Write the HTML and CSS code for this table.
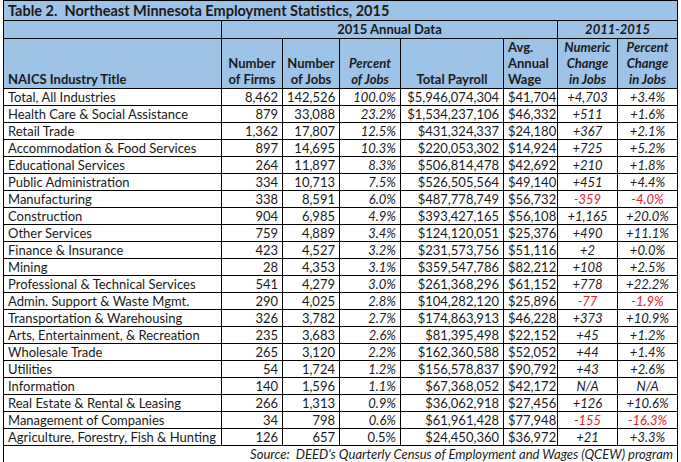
FILE: index.html
```html
<!DOCTYPE html>
<html>
<head>
<meta charset="utf-8">
<link rel="stylesheet" href="styles.css">
</head>
<body>
<table class="stats">
  <colgroup>
    <col class="c-name"><col class="c-firms"><col class="c-jobs"><col class="c-pct"><col class="c-pay"><col class="c-wage"><col class="c-num"><col class="c-chg">
  </colgroup>
  <thead>
    <tr class="r-title"><th colspan="8" class="title">Table 2.&nbsp; Northeast Minnesota Employment Statistics, 2015</th></tr>
    <tr class="r-group"><th></th><th colspan="5" class="grp">2015 Annual Data</th><th colspan="2" class="grp it">2011-2015</th></tr>
    <tr class="r-head">
      <th class="h-left">NAICS Industry Title</th>
      <th class="h-center">Number<br>of Firms</th>
      <th class="h-center">Number<br>of Jobs</th>
      <th class="h-center it">Percent<br>of Jobs</th>
      <th class="h-center">Total Payroll</th>
      <th class="h-left h-wage">Avg.<br>Annual<br>Wage</th>
      <th class="h-center it">Numeric<br>Change<br>in Jobs</th>
      <th class="h-center it">Percent<br>Change<br>in Jobs</th>
    </tr>
  </thead>
  <tbody>
    <tr><td class="name">Total, All Industries</td><td class="n">8,462</td><td class="n">142,526</td><td class="n it">100.0%</td><td class="n">$5,946,074,304</td><td class="n">$41,704</td><td class="c it">+4,703</td><td class="c it">+3.4%</td></tr>
    <tr><td class="name">Health Care &amp; Social Assistance</td><td class="n">879</td><td class="n">33,088</td><td class="n it">23.2%</td><td class="n">$1,534,237,106</td><td class="n">$46,332</td><td class="c it">+511</td><td class="c it">+1.6%</td></tr>
    <tr><td class="name">Retail Trade</td><td class="n">1,362</td><td class="n">17,807</td><td class="n it">12.5%</td><td class="n">$431,324,337</td><td class="n">$24,180</td><td class="c it">+367</td><td class="c it">+2.1%</td></tr>
    <tr><td class="name">Accommodation &amp; Food Services</td><td class="n">897</td><td class="n">14,695</td><td class="n it">10.3%</td><td class="n">$220,053,302</td><td class="n">$14,924</td><td class="c it">+725</td><td class="c it">+5.2%</td></tr>
    <tr><td class="name">Educational Services</td><td class="n">264</td><td class="n">11,897</td><td class="n it">8.3%</td><td class="n">$506,814,478</td><td class="n">$42,692</td><td class="c it">+210</td><td class="c it">+1.8%</td></tr>
    <tr><td class="name">Public Administration</td><td class="n">334</td><td class="n">10,713</td><td class="n it">7.5%</td><td class="n">$526,505,564</td><td class="n">$49,140</td><td class="c it">+451</td><td class="c it">+4.4%</td></tr>
    <tr><td class="name">Manufacturing</td><td class="n">338</td><td class="n">8,591</td><td class="n it">6.0%</td><td class="n">$487,778,749</td><td class="n">$56,732</td><td class="c it neg">-359</td><td class="c it neg">-4.0%</td></tr>
    <tr><td class="name">Construction</td><td class="n">904</td><td class="n">6,985</td><td class="n it">4.9%</td><td class="n">$393,427,165</td><td class="n">$56,108</td><td class="c it">+1,165</td><td class="c it">+20.0%</td></tr>
    <tr><td class="name">Other Services</td><td class="n">759</td><td class="n">4,889</td><td class="n it">3.4%</td><td class="n">$124,120,051</td><td class="n">$25,376</td><td class="c it">+490</td><td class="c it">+11.1%</td></tr>
    <tr><td class="name">Finance &amp; Insurance</td><td class="n">423</td><td class="n">4,527</td><td class="n it">3.2%</td><td class="n">$231,573,756</td><td class="n">$51,116</td><td class="c it">+2</td><td class="c it">+0.0%</td></tr>
    <tr><td class="name">Mining</td><td class="n">28</td><td class="n">4,353</td><td class="n it">3.1%</td><td class="n">$359,547,786</td><td class="n">$82,212</td><td class="c it">+108</td><td class="c it">+2.5%</td></tr>
    <tr><td class="name">Professional &amp; Technical Services</td><td class="n">541</td><td class="n">4,279</td><td class="n it">3.0%</td><td class="n">$261,368,296</td><td class="n">$61,152</td><td class="c it">+778</td><td class="c it">+22.2%</td></tr>
    <tr><td class="name">Admin. Support &amp; Waste Mgmt.</td><td class="n">290</td><td class="n">4,025</td><td class="n it">2.8%</td><td class="n">$104,282,120</td><td class="n">$25,896</td><td class="c it neg">-77</td><td class="c it neg">-1.9%</td></tr>
    <tr><td class="name">Transportation &amp; Warehousing</td><td class="n">326</td><td class="n">3,782</td><td class="n it">2.7%</td><td class="n">$174,863,913</td><td class="n">$46,228</td><td class="c it">+373</td><td class="c it">+10.9%</td></tr>
    <tr><td class="name">Arts, Entertainment, &amp; Recreation</td><td class="n">235</td><td class="n">3,683</td><td class="n it">2.6%</td><td class="n">$81,395,498</td><td class="n">$22,152</td><td class="c it">+45</td><td class="c it">+1.2%</td></tr>
    <tr><td class="name">Wholesale Trade</td><td class="n">265</td><td class="n">3,120</td><td class="n it">2.2%</td><td class="n">$162,360,588</td><td class="n">$52,052</td><td class="c it">+44</td><td class="c it">+1.4%</td></tr>
    <tr><td class="name">Utilities</td><td class="n">54</td><td class="n">1,724</td><td class="n it">1.2%</td><td class="n">$156,578,837</td><td class="n">$90,792</td><td class="c it">+43</td><td class="c it">+2.6%</td></tr>
    <tr><td class="name">Information</td><td class="n">140</td><td class="n">1,596</td><td class="n it">1.1%</td><td class="n">$67,368,052</td><td class="n">$42,172</td><td class="c it">N/A</td><td class="c it">N/A</td></tr>
    <tr><td class="name">Real Estate &amp; Rental &amp; Leasing</td><td class="n">266</td><td class="n">1,313</td><td class="n it">0.9%</td><td class="n">$36,062,918</td><td class="n">$27,456</td><td class="c it">+126</td><td class="c it">+10.6%</td></tr>
    <tr><td class="name">Management of Companies</td><td class="n">34</td><td class="n">798</td><td class="n it">0.6%</td><td class="n">$61,961,428</td><td class="n">$77,948</td><td class="c it neg">-155</td><td class="c it neg">-16.3%</td></tr>
    <tr><td class="name">Agriculture, Forestry, Fish &amp; Hunting</td><td class="n">126</td><td class="n">657</td><td class="n">0.5%</td><td class="n">$24,450,360</td><td class="n">$36,972</td><td class="c it">+21</td><td class="c it">+3.3%</td></tr>
    <tr class="r-source"><td colspan="8" class="source">Source:&nbsp; DEED's Quarterly Census of Employment and Wages (QCEW) program</td></tr>
  </tbody>
</table>
</body>
</html>
```
FILE: styles.css
```css
html, body {
  margin: 0;
  padding: 0;
  background: #ffffff;
}
body {
  padding: 0 0 0 3px;
  font-family: Lato, "Open Sans", sans-serif;
  font-size: 13px;
  color: #1a1a1a;
}
.stats {
  border-collapse: collapse;
  table-layout: fixed;
  width: 674px;
}
.c-name { width: 218px; }
.c-firms { width: 61px; }
.c-jobs { width: 57px; }
.c-pct { width: 61px; }
.c-pay { width: 103px; }
.c-wage { width: 54px; }
.c-num { width: 60px; }
.c-chg { width: 60px; }

.stats th, .stats td {
  border: 1px solid #000;
  padding: 0 4px;
  white-space: nowrap;
  line-height: 15px;
  overflow: hidden;
}
.stats thead th {
  background: #9dc3e6;
  font-weight: 700;
}
.r-title th { height: 19px; }
.title {
  text-align: left;
  font-size: 14.5px;
  padding-left: 8px;
}
.r-group th { height: 17px; }
.grp { text-align: center; }
.r-head th {
  height: 48px;
  vertical-align: bottom;
  line-height: 16px;
  padding-bottom: 1px;
}
.h-left { text-align: left; padding-left: 8px; }
.h-wage { padding-left: 7px; }
.h-center { text-align: center; }
.it { font-style: italic; }

.stats tbody td { height: 16px; }
.name { text-align: left; padding-left: 8px; }
.n { text-align: right; }
.c { text-align: center; }
.neg { color: #e8202a; }
.source {
  text-align: right;
  font-style: italic;
  padding-right: 6px;
}
```
